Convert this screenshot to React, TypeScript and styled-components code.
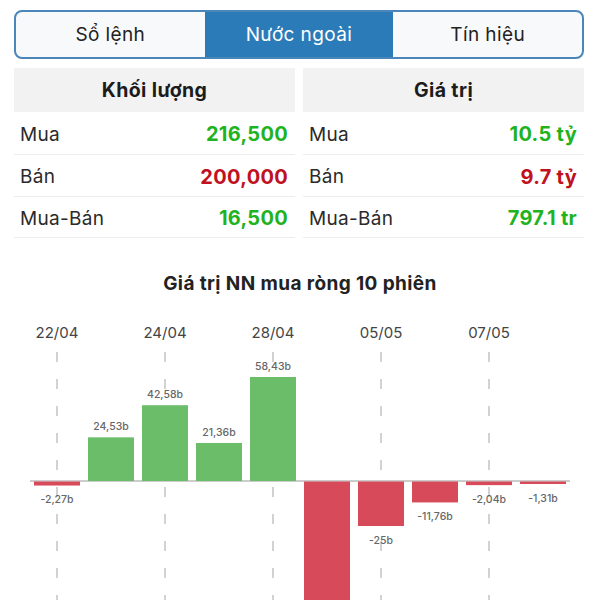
import React from 'react'
import styled, { createGlobalStyle } from 'styled-components'

const GlobalStyle = createGlobalStyle`
  html, body {
    margin: 0;
    padding: 0;
    background: #fff;
  }
  body {
    font-family: Inter, Roboto, 'Noto Sans', sans-serif;
    color: #222;
  }
`

const tabs = ['Sổ lệnh', 'Nước ngoài', 'Tín hiệu']

type Row = { label: string; value: string; tone: 'up' | 'down' }

const volumeRows: Row[] = [
  { label: 'Mua', value: '216,500', tone: 'up' },
  { label: 'Bán', value: '200,000', tone: 'down' },
  { label: 'Mua-Bán', value: '16,500', tone: 'up' },
]

const valueRows: Row[] = [
  { label: 'Mua', value: '10.5 tỷ', tone: 'up' },
  { label: 'Bán', value: '9.7 tỷ', tone: 'down' },
  { label: 'Mua-Bán', value: '797.1 tr', tone: 'up' },
]

const sessions = [
  { date: '22/04', value: -2.27, label: '-2,27b' },
  { date: '23/04', value: 24.53, label: '24,53b' },
  { date: '24/04', value: 42.58, label: '42,58b' },
  { date: '25/04', value: 21.36, label: '21,36b' },
  { date: '28/04', value: 58.43, label: '58,43b' },
  { date: '29/04', value: -78.2, label: '-78,2b' },
  { date: '05/05', value: -25, label: '-25b' },
  { date: '06/05', value: -11.76, label: '-11,76b' },
  { date: '07/05', value: -2.04, label: '-2,04b' },
  { date: '08/05', value: -1.31, label: '-1,31b' },
]

// chart geometry
const CHART_H = 304
const ZERO = 185
const SCALE = 1.78
const LEFT = 30
const SLOT = 54
const BAR_W = 46

const NetChart = () => (
  <ChartSvg width={600} height={CHART_H} viewBox={`0 0 600 ${CHART_H}`}>
    {sessions.map((s, i) => {
      if (i % 2 !== 0) return null
      const cx = LEFT + SLOT / 2 + i * SLOT
      return (
        <g key={'grid' + i}>
          <text
            x={cx}
            y={42}
            textAnchor="middle"
            fontSize={15}
            fill="#444"
            fontFamily="Inter, Roboto, sans-serif"
          >
            {s.date}
          </text>
          <line
            x1={cx}
            x2={cx}
            y1={56}
            y2={CHART_H}
            stroke="#c4c4c4"
            strokeWidth={1.5}
            strokeDasharray="10 17"
          />
        </g>
      )
    })}
    <line x1={LEFT} x2={570} y1={ZERO} y2={ZERO} stroke="#9a9a9a" strokeWidth={1} />
    {sessions.map((s, i) => {
      const x = LEFT + 4 + i * SLOT
      const h = Math.max(Math.abs(s.value) * SCALE, 2.5)
      const up = s.value >= 0
      const ly = up ? ZERO - h - 7 : ZERO + h + 18
      return (
        <g key={'bar' + i}>
          <rect
            x={x}
            y={up ? ZERO - h : ZERO + 0.5}
            width={BAR_W}
            height={h}
            fill={up ? '#6bbd69' : '#d74a5a'}
          />
          {ly < CHART_H && (
            <text
              x={x + BAR_W / 2}
              y={ly}
              textAnchor="middle"
              fontSize={10.5}
              fontWeight={500}
              fill="#666"
              fontFamily="Inter, Roboto, sans-serif"
            >
              {s.label}
            </text>
          )}
        </g>
      )
    })}
  </ChartSvg>
)

const StatTable = ({ title, rows }: { title: string; rows: Row[] }) => (
  <Table>
    <TableHead>{title}</TableHead>
    {rows.map((r) => (
      <TableRow key={r.label}>
        <span>{r.label}</span>
        <Value tone={r.tone}>{r.value}</Value>
      </TableRow>
    ))}
  </Table>
)

const App = () => {
  const active = 1
  return (
    <Page>
      <GlobalStyle />
      <Segmented>
        {tabs.map((t, i) => (
          <Segment key={t} $active={i === active}>
            {t}
          </Segment>
        ))}
      </Segmented>
      <Tables>
        <StatTable title="Khối lượng" rows={volumeRows} />
        <StatTable title="Giá trị" rows={valueRows} />
      </Tables>
      <ChartTitle>Giá trị NN mua ròng 10 phiên</ChartTitle>
      <NetChart />
    </Page>
  )
}

export default App

const Page = styled.div`
  width: 600px;
  height: 600px;
  overflow: hidden;
  display: flex;
  flex-direction: column;
  padding-top: 10px;
  box-sizing: border-box;
  & > * {
    flex-shrink: 0;
  }
`

const Segmented = styled.div`
  display: grid;
  grid-template-columns: 1fr 1fr 1fr;
  margin: 0 16px 0 14px;
  height: 49px;
  border: 2px solid #4a86b9;
  border-radius: 8px;
  overflow: hidden;
  box-sizing: border-box;
  background: #f8f9fb;
`

const Segment = styled.div<{ $active: boolean }>`
  display: flex;
  align-items: center;
  justify-content: center;
  font-size: 19px;
  letter-spacing: 0.4px;
  color: ${(p) => (p.$active ? '#fff' : '#222')};
  background: ${(p) => (p.$active ? '#2b7bb8' : 'transparent')};
`

const Tables = styled.div`
  display: grid;
  grid-template-columns: 1fr 1fr;
  column-gap: 8px;
  margin: 9px 16px 0 14px;
`

const Table = styled.div`
  display: flex;
  flex-direction: column;
`

const TableHead = styled.div`
  height: 44px;
  display: flex;
  align-items: center;
  justify-content: center;
  background: #f2f2f2;
  font-size: 19.5px;
  letter-spacing: 0.4px;
  font-weight: 700;
  color: #1c1c1c;
`

const TableRow = styled.div`
  box-sizing: border-box;
  height: 42px;
  display: flex;
  align-items: center;
  justify-content: space-between;
  padding: 2px 7px 0 6px;
  border-bottom: 1px solid #ececec;
  font-size: 19px;
  letter-spacing: 0.3px;
  color: #2a2a2a;
  &:nth-child(2) {
    height: 43px;
  }
  &:last-child {
    height: 41px;
  }
`

const Value = styled.span<{ tone: 'up' | 'down' }>`
  font-weight: 700;
  font-size: 20px;
  letter-spacing: 0.3px;
  color: ${(p) => (p.tone === 'up' ? '#1fb31f' : '#c0111f')};
`

const ChartTitle = styled.div`
  margin-top: 34px;
  height: 24px;
  line-height: 24px;
  text-align: center;
  font-size: 19px;
  letter-spacing: 0.4px;
  font-weight: 700;
  color: #222;
`

const ChartSvg = styled.svg`
  display: block;
`
